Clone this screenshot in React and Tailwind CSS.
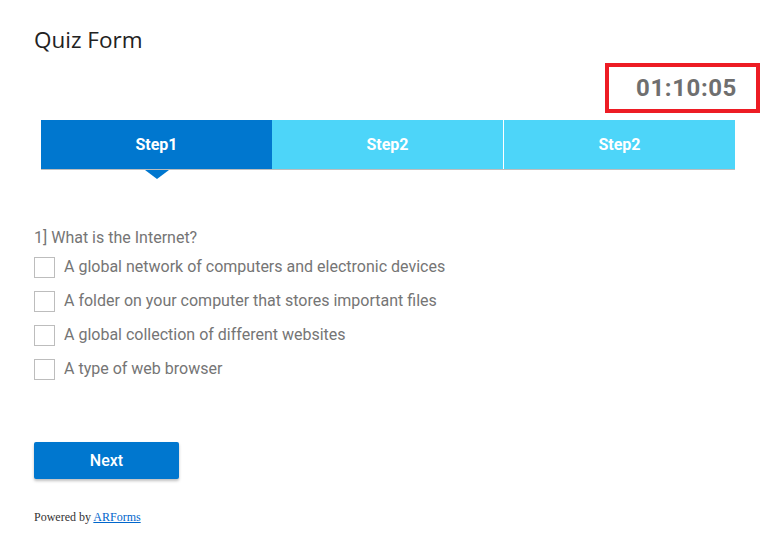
import React from 'react';

const options = [
	'A global network of computers and electronic devices',
	'A folder on your computer that stores important files',
	'A global collection of different websites',
	'A type of web browser',
];

const steps = ['Step1', 'Step2', 'Step2'];

const App = () => {
	return (
		<div className="w-[777px] h-[550px] bg-white font-['Roboto',sans-serif] pl-[34px] pt-[25px]">
			<h1 className="text-[22.5px] leading-[30px] text-[#222] font-normal font-['Open_Sans',sans-serif]">Quiz Form</h1>

			{/* timer */}
			<div className="flex justify-end pr-[17px] mt-[8px]">
				<div className="w-[155px] h-[50px] border-4 border-[#ed1c24] flex items-center justify-end pr-[19px]">
					<span className="text-[24px] font-bold tracking-[0.6px] text-[#6f6f6f]">01:10:05</span>
				</div>
			</div>

			{/* steps */}
			<div className="ml-[7px] mt-[7px] w-[694px]">
				<div className="flex h-[50px] border-b border-[#bdbdbd]">
					{steps.map((s, i) => (
						<div
							key={i}
							className={
								'flex-1 flex items-center justify-center text-white font-bold text-[16px] ' +
								(i === 0 ? 'bg-[#0077cf]' : 'bg-[#4dd5f9]') +
								(i === 2 ? ' border-l border-white' : '')
							}>
							{s}
						</div>
					))}
				</div>
				<div className="w-[231px] flex justify-center">
					<div className="w-0 h-0 border-l-[12px] border-r-[12px] border-t-[9px] border-l-transparent border-r-transparent border-t-[#0077cf]" />
				</div>
			</div>

			{/* question */}
			<div className="mt-[49px] text-[#757575] text-[16px]">
				<p className="leading-[20px]">1] What is the Internet?</p>
				<div className="mt-[9px] flex flex-col gap-[14px]">
					{options.map((o, i) => (
						<label key={i} className="flex items-center gap-[9px] h-[20px]">
							<span className="w-[21px] h-[21px] border border-[#bdbdbd] bg-white shrink-0" />
							<span className="leading-[20px]">{o}</span>
						</label>
					))}
				</div>
			</div>

			<button
				type="button"
				className="mt-[63px] w-[145px] h-[37px] bg-[#0077cf] text-white text-[16px] font-medium rounded-[2px] shadow-[0_2px_3px_rgba(0,0,0,0.25)]">
				Next
			</button>

			<div className="mt-[29px] text-[12px] font-['Liberation_Serif',serif] text-[#333]">
				Powered by <a href="#" className="text-[#0066cc] underline">ARForms</a>
			</div>
		</div>
	);
};

export default App;
